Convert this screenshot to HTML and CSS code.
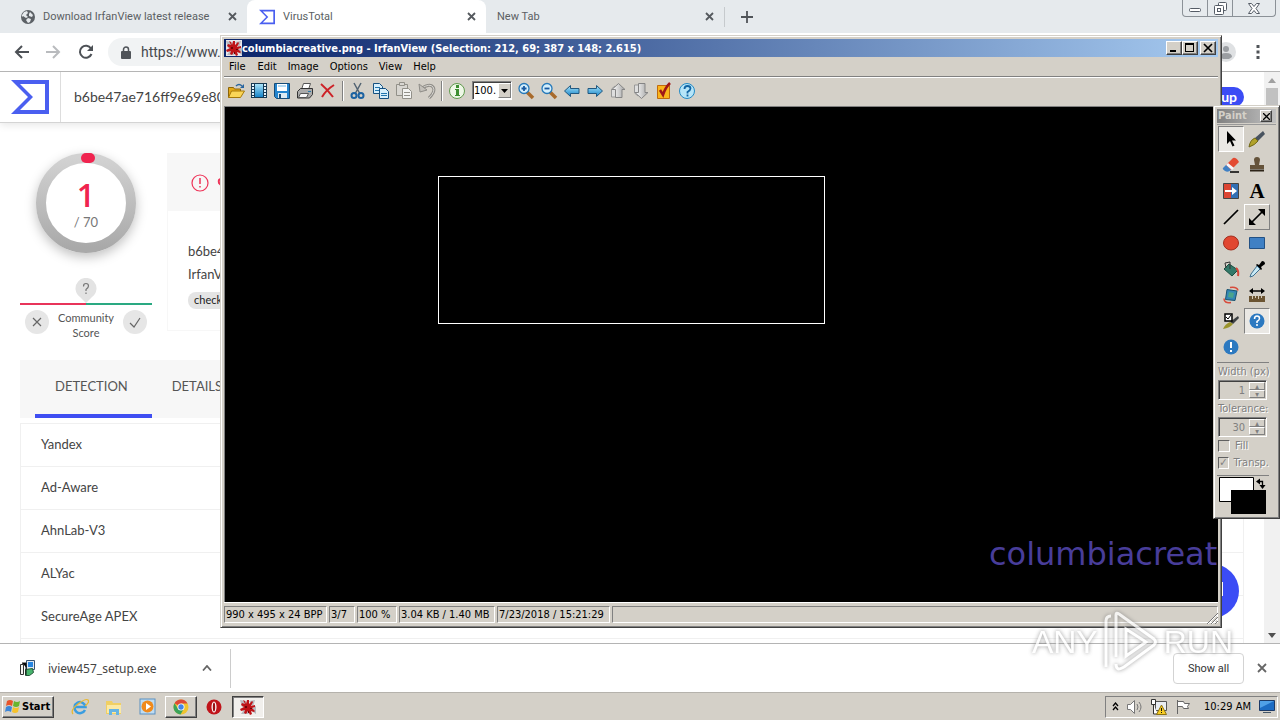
FILE: index.html
```html
<!DOCTYPE html>
<html lang="en">
<head>
<meta charset="utf-8">
<title>VirusTotal</title>
<link rel="stylesheet" href="styles.css">
</head>
<body>
<svg class="defs" aria-hidden="true">
  <defs>
    <linearGradient id="ring" x1="0" y1="0" x2="0" y2="1"><stop offset="0" stop-color="#d2d2d2"/><stop offset="1" stop-color="#a9a9a9"/></linearGradient>
    <linearGradient id="blue" x1="0" y1="0" x2="0" y2="1"><stop offset="0" stop-color="#a9e4fa"/><stop offset="1" stop-color="#1583c8"/></linearGradient>
    <linearGradient id="gray" x1="0" y1="0" x2="1" y2="0"><stop offset="0" stop-color="#fff"/><stop offset="1" stop-color="#a4a4a4"/></linearGradient>
    <symbol id="vt" viewBox="0 0 38 34"><path fill="#4a5ff0" fill-rule="evenodd" d="M0 0H38V34H0L17 17ZM9 4L22 17L9 30H34V4Z"/></symbol>
    <symbol id="splat" viewBox="0 0 16 16"><path fill="#b9babf" d="M0 1l6 1 1 5-5 1zM9 2l6-1-2 7zM1 15l4-6 4 6zM10 11l6 4v-8z"/><path fill="#bf1418" d="M3 1l2 1 1 3 1-4h2v4l3-3 1 1-2 4 4-1v2l-3 1 3 3-1 1-3-1 1 3-2 1-2-4-2 3-2-1 1-3-4 1-1-2 4-2-3-2 1-2 3 1z"/><path fill="#6d0508" d="M5 7h2v2H5zM10 9h2v1h-2zM8 12h1v2H8z"/></symbol>
  </defs>
</svg>

<div class="desktop">
  <section class="chrome">
    <div class="tabs">
      <div class="tab">
        <svg width="14" height="14" viewBox="0 0 14 14"><circle cx="7" cy="7" r="7" fill="#5c6166"/><path fill="#e6eaed" d="M3 2l3-1 1 2-2 2 2 2-2 1-3-2-1 1V5zM9 2l3 3-1 2-3-1V4zM7 8l3 1-1 3-2 1-2-3z"/></svg>
        <span class="tab-name">Download IrfanView latest release</span>
        <button class="x" aria-label="Close tab"><svg width="9" height="9" viewBox="0 0 9 9"><path d="M1 1l7 7M8 1L1 8" stroke="#55595e" stroke-width="1.8"/></svg></button>
      </div>
      <div class="tab active">
        <svg width="16" height="16"><use href="#vt"/></svg>
        <span class="tab-name">VirusTotal</span>
        <button class="x" aria-label="Close tab"><svg width="9" height="9" viewBox="0 0 9 9"><path d="M1 1l7 7M8 1L1 8" stroke="#55595e" stroke-width="1.8"/></svg></button>
      </div>
      <div class="tab last">
        <span class="tab-name">New Tab</span>
        <button class="x" aria-label="Close tab"><svg width="9" height="9" viewBox="0 0 9 9"><path d="M1 1l7 7M8 1L1 8" stroke="#55595e" stroke-width="1.8"/></svg></button>
      </div>
      <button class="x plus" aria-label="New tab"><svg width="12" height="12" viewBox="0 0 12 12"><path d="M6 0v12M0 6h12" stroke="#505458" stroke-width="1.8"/></svg></button>
      <div class="frame-buttons">
        <button aria-label="Minimize"><svg width="13" height="12" viewBox="0 0 13 12"><rect x=".5" y="6.500" width="11" height="3" rx="1" fill="#fff" stroke="#555c66"/></svg></button>
        <button aria-label="Restore"><svg width="13" height="13" viewBox="0 0 13 13"><g fill="#fff" stroke="#555c66"><rect x="4.500" y=".5" width="8" height="8" rx="1"/><rect x=".5" y="3.500" width="9" height="9" rx="1"/><rect x="3.500" y="6.500" width="3" height="3"/></g></svg></button>
        <button class="wide" aria-label="Close"><svg width="12" height="11" viewBox="0 0 12 11"><path d="M.5.5h3L6 3.500 8.500.5h3L8 5.500l3.500 5h-3L6 7.500l-2.500 3h-3L4 5.500z" fill="#fff" stroke="#555c66"/></svg></button>
      </div>
    </div>

    <div class="nav">
      <button aria-label="Back"><svg width="16" height="14" viewBox="0 0 16 14"><path d="M15 7H2M8 1L2 7l6 6" fill="none" stroke="#4d5156" stroke-width="2"/></svg></button>
      <button aria-label="Forward"><svg width="16" height="14" viewBox="0 0 16 14"><path d="M0 7h13M7 1l6 6-6 6" fill="none" stroke="#b9bbbe" stroke-width="2"/></svg></button>
      <button aria-label="Reload"><svg width="16" height="16" viewBox="0 0 16 16"><path d="M13 4.500A6 6 0 1 0 13.500 10" fill="none" stroke="#4d5156" stroke-width="2"/><path d="M15 1v6H9z" fill="#4d5156"/></svg></button>
      <label class="omnibox">
        <svg width="10" height="13" viewBox="0 0 10 13"><rect y="5" width="10" height="8" rx="1" fill="#505459"/><path d="M2.500 6V3.500a2.500 2.500 0 0 1 5 0V6" fill="none" stroke="#505459" stroke-width="1.500"/></svg>
        <input aria-label="Address" value="https://www.">
      </label>
      <svg class="avatar" width="20" height="20" viewBox="0 0 20 20"><circle cx="10" cy="10" r="10" fill="#dfe1e3"/><circle cx="10" cy="7" r="3" fill="#9b9ea2"/><path d="M4 15q0-4 6-4t6 4l-3 2H7z" fill="#9b9ea2"/></svg>
      <button aria-label="Menu"><svg width="4" height="14" viewBox="0 0 4 14"><path d="M.5 0h3v3h-3zM.5 5.500h3v3h-3zM.5 11h3v3h-3z" fill="#505459"/></svg></button>
    </div>

    <div class="viewport">
      <div class="page">
        <header class="vt-head">
          <a class="vt-logo" href="#" aria-label="VirusTotal"><svg width="38" height="34"><use href="#vt"/></svg></a>
          <input class="vt-search" aria-label="Search" value="b6be47ae716ff9e69e80">
          <button class="signup">Sign up</button>
        </header>
        <main class="vt-main">
          <div class="report">
            <div class="verdict">
              <div class="score">
                <svg width="100" height="100" viewBox="0 0 100 100"><circle cx="50" cy="50" r="45" fill="#fff" stroke="url(#ring)" stroke-width="10"/><rect x="45" y="0" width="14" height="10" rx="5" fill="#f0244f"/></svg>
                <div class="score-text"><span class="hits">1</span><span class="total">/ 70</span></div>
              </div>
              <div class="meter">
                <svg width="22" height="25" viewBox="0 0 22 25"><path d="M11 25L5 19A10.500 10.500 0 1 1 17 19z" fill="#e3e3e3"/><path d="M8.500 8.500q0-3 2.500-3t2.500 2.500q0 1.500-2.500 3.500v1.500M11 14.500v1.500" fill="none" stroke="#777" stroke-width="1.200"/></svg>
                <div class="bar"></div>
              </div>
              <div class="votes">
                <button aria-label="Malicious"><svg width="10" height="10" viewBox="0 0 10 10"><path d="M1 1l8 8M9 1L1 9" stroke="#666" stroke-width="1.200"/></svg></button>
                <span>Community<br>Score</span>
                <button aria-label="Harmless"><svg width="12" height="11" viewBox="0 0 12 11"><path d="M1 6l4 4 6-9" fill="none" stroke="#666" stroke-width="1.200"/></svg></button>
              </div>
            </div>
            <div class="card">
              <div class="card-head"><svg width="36" height="18" viewBox="0 0 36 18"><circle cx="9" cy="9" r="8" fill="none" stroke="#ee3358" stroke-width="1.200"/><path d="M9 4v6M9 12v1.500" stroke="#ee3358" stroke-width="1.500"/><path d="M34 5h-4q-3 0-2 4l5 5" fill="none" stroke="#ee3358" stroke-width="2"/></svg></div>
              <div class="card-body"><span>b6be4</span><span>IrfanV</span><span class="tag">check</span></div>
            </div>
          </div>
          <nav class="vt-tabs"><a class="on" href="#">DETECTION</a><a href="#">DETAILS</a></nav>
          <table class="engines">
            <tr><td>Yandex</td></tr>
            <tr><td>Ad-Aware</td></tr>
            <tr><td>AhnLab-V3</td></tr>
            <tr><td>ALYac</td></tr>
            <tr><td>SecureAge APEX</td></tr>
            <tr><td></td></tr>
          </table>
        </main>
        <button class="fab" aria-label="Chat"><svg width="22" height="18" viewBox="0 0 22 18"><path d="M0 0h22v14H8l-4 4v-4H0z" fill="#fff"/></svg></button>
      </div>
      <div class="scroll">
        <svg width="8" height="5" viewBox="0 0 8 5"><path d="M0 5l4-5 4 5z" fill="#a0a0a0"/></svg>
        <div class="thumb"></div>
        <svg class="down" width="8" height="5" viewBox="0 0 8 5"><path d="M0 0l4 5 4-5z" fill="#505050"/></svg>
      </div>
    </div>

    <div class="downloads">
      <div class="dl-item">
        <svg width="16" height="16" viewBox="0 0 16 16"><path fill="#dfe8f2" stroke="#39536f" d="M6.500.5h8v9h-8z"/><path fill="#2786e2" d="M8 2h5v5H8z"/><path fill="#8ba1b5" d="M9 10h4v2H9z"/><path fill="#f4f4f0" stroke="#333" d="M.5 4.500h3v10h-3z"/><path fill="#47b46c" stroke="#26573a" d="M5.500 9.500l7-1 1 4-4 3h-4z"/><path stroke="#111" d="M2 3h4v4M6 6v9"/></svg>
        <span>iview457_setup.exe</span>
        <button class="x" aria-label="Download options"><svg width="10" height="6" viewBox="0 0 10 6"><path d="M1 5.500L5 1l4 4.500" fill="none" stroke="#666" stroke-width="1.800"/></svg></button>
      </div>
      <button class="show-all">Show all</button>
      <button class="x" aria-label="Close downloads"><svg width="10" height="10" viewBox="0 0 10 10"><path d="M1 1l8 8M9 1L1 9" stroke="#666" stroke-width="1.800"/></svg></button>
    </div>
  </section>

  <footer class="taskbar">
    <button class="start"><svg width="16" height="16" viewBox="0 0 16 16"><path fill="#e8542a" d="M2 2q3-2 6 0L7 7Q4 5 1 7z"/><path fill="#68b52f" d="M9 2q3 2 6 0l-1 5q-3 2-6 0z"/><path fill="#3d86d8" d="M1 8q3-2 6 0l-1 5q-3-2-6 0z"/><path fill="#f6c22c" d="M8 8q3 2 6 0l-1 5q-3 2-6 0z"/></svg>Start</button>
    <button class="quick" aria-label="Internet Explorer"><svg width="18" height="18" viewBox="0 0 18 18"><path d="M14 12a5.500 5.500 0 1 1 .5-3H4" fill="none" stroke="#3a9de0" stroke-width="2.500"/><path d="M2 16Q-1 12 7 6t10-4q2 2-3 6" fill="none" stroke="#e9b932" stroke-width="1.300"/></svg></button>
    <button class="quick" aria-label="Explorer"><svg width="18" height="18" viewBox="0 0 18 18"><path fill="#f0cf63" d="M1 3h6l1 2h8v11H1z"/><path fill="#fbe9a4" d="M2 7h14v8H2z"/><path fill="#67b4e2" d="M4 17v-6h10v6h-3v-3H7v3z"/></svg></button>
    <button class="quick" aria-label="Media Player"><svg width="18" height="18" viewBox="0 0 18 18"><rect x="1" y="1" width="15" height="15" fill="#bfdcf2" stroke="#5a90c0"/><circle cx="8.500" cy="8.500" r="6" fill="#f08a1c"/><path d="M7 5l5 3.500L7 12z" fill="#fff"/></svg></button>
    <button class="task" aria-label="Chrome"><svg width="16" height="16" viewBox="0 0 16 16"><circle cx="8" cy="8" r="7.500" fill="#efc430"/><path d="M8 8L1.500 4.200A7.500 7.500 0 0 1 14.500 4.500H8z" fill="#dd4938"/><path d="M1.500 4.200A7.500 7.500 0 0 0 7.500 15.500L11 9.500 5 9.800z" fill="#3ba35a"/><circle cx="8" cy="8" r="3.500" fill="#fff"/><circle cx="8" cy="8" r="2.700" fill="#4285e8"/></svg></button>
    <button class="quick" aria-label="Opera"><svg width="16" height="16" viewBox="0 0 16 16"><circle cx="8" cy="8" r="7.500" fill="#c0141a"/><ellipse cx="8" cy="8" rx="2.500" ry="5.500" fill="#fff"/><ellipse cx="8" cy="8" rx="1.200" ry="4.500" fill="#9b1014"/></svg></button>
    <button class="task pressed" aria-label="IrfanView"><svg width="16" height="16"><use href="#splat"/></svg></button>
    <div class="tray">
      <svg width="7" height="9" viewBox="0 0 7 9"><path d="M1 4l2.500-3L6 4M1 8l2.500-3L6 8" fill="none" stroke="#000" stroke-width="1.300"/></svg>
      <svg width="16" height="16" viewBox="0 0 16 16"><path d="M.5 5.500h3l4-4v13l-4-4h-3z" fill="#fff" stroke="#777"/><path d="M10 5q2 3 0 6M12 3q4 5 0 10" fill="none" stroke="#777"/></svg>
      <svg width="16" height="16" viewBox="0 0 16 16"><path d="M4.500 2.500h11v9h-11z" fill="#e9edf2" stroke="#555"/><path d="M.5.5h4v5h-4zM2.500 5v10h4" fill="#fff" stroke="#333"/><path d="M10.500 6l5 9.500h-10z" fill="#f8cd24" stroke="#8c7211"/><path d="M10.500 9v3M10.500 13v1" stroke="#111"/></svg>
      <svg width="16" height="16" viewBox="0 0 16 16"><path d="M2.500 1v14M2.500 2.500h6l1 2h5l-2 3 1 2h-5l-1-2h-5" fill="#fff" stroke="#666"/></svg>
      <time>10:29 AM</time>
      <svg width="16" height="14" viewBox="0 0 16 14"><path d="M.5.500h15v10H.5z" fill="#1c6cc4" stroke="#1c3a67"/><path d="M1 1h14L1 8z" fill="#4fa0e8"/><path d="M4 12h8v1H4z" fill="#456"/></svg>
    </div>
  </footer>

  <section class="window irfan">
    <div class="title">
      <svg width="16" height="16"><rect width="16" height="16" fill="#e8e8ee"/><use href="#splat"/></svg>
      <h1>columbiacreative.png - IrfanView (Selection: 212, 69; 387 x 148; 2.615)</h1>
      <button aria-label="Minimize"><svg width="10" height="10" viewBox="0 0 10 10"><path d="M1 7h6v2H1z"/></svg></button>
      <button aria-label="Maximize"><svg width="10" height="10" viewBox="0 0 10 10"><path d="M0 0h9v9H0zM1 2v6h7V2z" fill-rule="evenodd"/></svg></button>
      <button class="close" aria-label="Close"><svg width="10" height="10" viewBox="0 0 10 10"><path d="M1 1l8 8M9 1L1 9" stroke="#000" stroke-width="1.700"/></svg></button>
    </div>
    <nav class="menu"><button>File</button><button>Edit</button><button>Image</button><button>Options</button><button>View</button><button>Help</button></nav>
    <div class="tools">
      <button aria-label="Open"><svg width="18" height="18" viewBox="0 0 18 18"><path fill="#e5a817" stroke="#8c6508" d="M1.500 15.500v-10h5l1 1.500h6v3"/><path fill="#fbd556" stroke="#a67808" d="M1.500 15.500l3-6.500h13l-4 6.500z"/><path d="M9 4q3-3 6 0" fill="none" stroke="#28659f" stroke-width="1.500"/><path fill="#28659f" d="M17 2v4h-4z"/></svg></button>
      <button aria-label="Slideshow"><svg width="18" height="18" viewBox="0 0 18 18"><path fill="#163a54" d="M1 1h16v15H1z"/><path fill="url(#blue)" d="M5 2h8v13H5z"/><path stroke="#e6f5ff" stroke-dasharray="2 1" d="M3 2v13M15 2v13" stroke-width="2"/></svg></button>
      <button aria-label="Save"><svg width="18" height="18" viewBox="0 0 18 18"><path fill="#2384ce" stroke="#164c78" d="M1.500 1.500h15v15h-13l-2-2z"/><path fill="#fff" d="M4 2h10v7H4z"/><path fill="#b3d9f2" d="M5 3h8v2H5z"/><path fill="#dceaf3" d="M5 11h9v5H5z"/><path fill="#164c78" d="M6 12h2v4H6z"/></svg></button>
      <button aria-label="Print"><svg width="18" height="18" viewBox="0 0 18 18"><path fill="#fff" stroke="#555" d="M5.500 7.500l2-6h7l-2 6z"/><path fill="#aaa" stroke="#333" d="M1.500 9.500l3-3h12v6l-3 3.500h-12z"/><path fill="#f7f7f7" stroke="#555" d="M4.500 11.500h8l-2 4h-8z"/><path stroke="#2a79a9" d="M12 9.500h3"/></svg></button>
      <button aria-label="Delete"><svg width="18" height="18" viewBox="0 0 18 18"><path d="M2 2q6 5 12 13M15 3Q7 8 3 15" fill="none" stroke="#cd2127" stroke-width="2"/></svg></button>
      <i class="sep"></i>
      <button aria-label="Cut"><svg width="18" height="18" viewBox="0 0 18 18"><path d="M5 1l6 11M12 1L6 12" stroke="#526372" stroke-width="1.500"/><circle cx="5" cy="13.500" r="2.500" fill="none" stroke="#1c62a1" stroke-width="2"/><circle cx="12" cy="13.500" r="2.500" fill="none" stroke="#1c62a1" stroke-width="2"/></svg></button>
      <button aria-label="Copy"><svg width="18" height="18" viewBox="0 0 18 18"><g fill="#d7effc" stroke="#155080"><path d="M1.500 1.500h6l3 3v7h-9z"/><path d="M7.500 6.500h6l3 3v7h-9z"/></g><path d="M3 5.500h5M3 8.500h4M9 11.500h6M9 13.500h6" stroke="#2175ae"/></svg></button>
      <button aria-label="Paste"><svg width="18" height="18" viewBox="0 0 18 18"><g fill="#d8d6d1" stroke="#929089"><path d="M1.500 2.500h11v11h-11z"/><path d="M4.500.5h5v3h-5z"/><path fill="#f4f4f2" d="M7.500 6.500h6l3 3v7h-9z"/></g><path d="M9 10.500h6M9 13.500h6" stroke="#929089"/></svg></button>
      <button aria-label="Undo"><svg width="18" height="18" viewBox="0 0 18 18"><path d="M4 6q8-5 11-1t-4 11" fill="none" stroke="#8f8d88" stroke-width="3"/><path d="M4 6q8-5 11-1t-4 11" fill="none" stroke="#d9d7d2"/><path d="M1 2l1 8 7-2z" fill="#c3c0ba" stroke="#8f8d88"/></svg></button>
      <i class="sep"></i>
      <button aria-label="Information"><svg width="18" height="18" viewBox="0 0 18 18"><circle cx="9" cy="9" r="7.500" fill="#eef7e7" stroke="#609b4e"/><path d="M8 3h3v3H8zM7 7h4v6h1v1H7v-1h1V8H7z" fill="#3c8e30"/></svg></button>
      <div class="zoom"><select aria-label="Zoom"><option>100.</option></select><span class="drop"><svg width="7" height="4" viewBox="0 0 7 4"><path d="M0 0h7L3.500 4z"/></svg></span></div>
      <button aria-label="Zoom in"><svg width="18" height="18" viewBox="0 0 18 18"><path d="M10 10l6 6" stroke="#a86a2c" stroke-width="3.500"/><circle cx="7" cy="6.500" r="5" fill="#d5effc" stroke="#2579ba" stroke-width="1.300"/><path d="M7 4v5M4.500 6.500h5" stroke="#1759a1" stroke-width="1.800"/></svg></button>
      <button aria-label="Zoom out"><svg width="18" height="18" viewBox="0 0 18 18"><path d="M10 10l6 6" stroke="#a86a2c" stroke-width="3.500"/><circle cx="7" cy="6.500" r="5" fill="#d5effc" stroke="#2579ba" stroke-width="1.300"/><path d="M4.500 6.500h5" stroke="#1759a1" stroke-width="1.800"/></svg></button>
      <button aria-label="Previous"><svg width="18" height="18" viewBox="0 0 18 18"><path d="M1.500 9l6-5.500v3h8.500v5H7.500v3z" fill="url(#blue)" stroke="#215880"/></svg></button>
      <button aria-label="Next"><svg width="18" height="18" viewBox="0 0 18 18"><path d="M16.500 9l-6-5.500v3H2v5h8.500v3z" fill="url(#blue)" stroke="#215880"/></svg></button>
      <button aria-label="Previous page"><svg width="18" height="18" viewBox="0 0 18 18"><path d="M2.500 15V7L6 4l2 2v9z" fill="#dedede" stroke="#999"/><path d="M9.500 1.500l6.500 6h-3v8H6.500v-8H3z" fill="url(#gray)" stroke="#858585"/></svg></button>
      <button aria-label="Next page"><svg width="18" height="18" viewBox="0 0 18 18"><path d="M2.500 3v8L6 14l2-2V3z" fill="#dedede" stroke="#999"/><path d="M9.500 16.500l6.500-6h-3v-9H6.500v9H3z" fill="url(#gray)" stroke="#858585"/></svg></button>
      <button aria-label="Settings"><svg width="18" height="18" viewBox="0 0 18 18"><path fill="#fab51c" stroke="#c06b0d" d="M2.500 3.500h12v13h-12z"/><path d="M5 8l3 5q2-7 7-12" fill="none" stroke="#a01717" stroke-width="2.500"/></svg></button>
      <button aria-label="Help"><svg width="18" height="18" viewBox="0 0 18 18"><circle cx="9" cy="9" r="7.500" fill="#b6e5f9" stroke="#238ac5"/><path d="M6.500 7q0-3 3-3t3 2.500Q12.500 8 9.500 10v1.500M9.500 12.500v2" fill="none" stroke="#1164a3" stroke-width="1.800"/></svg></button>
    </div>
    <div class="canvas"><span class="picture-text">columbiacreat</span><div class="selection"></div></div>
    <div class="status">
      <span class="size">990 x 495 x 24 BPP</span><span class="index">3/7</span><span class="scale">100 %</span><span class="bytes">3.04 KB / 1.40 MB</span><span class="date">7/23/2018 / 15:21:29</span><span class="rest"></span>
      <svg class="grip" width="12" height="12" viewBox="0 0 12 12"><path d="M1 12L12 1M5 12l7-7M9 12l3-3" stroke="#777"/><path d="M2 12L12 2M6 12l6-6" stroke="#fff"/></svg>
    </div>
  </section>

  <section class="window paint">
    <div class="title"><h2>Paint</h2><button aria-label="Close"><svg width="7" height="7" viewBox="0 0 7 7"><path d="M0 0l7 7M7 0L0 7" stroke="#000" stroke-width="1.300"/></svg></button></div>
    <div class="palette">
      <button class="down" aria-label="Select"><svg width="18" height="18" viewBox="0 0 18 18"><path d="M5 1v13l3-3 2.500 5.500 2-1L10 10.500h4z"/></svg></button>
      <button aria-label="Brush"><svg width="18" height="18" viewBox="0 0 18 18"><path d="M15 1l2 3-7 7-3-3z" fill="#49535f"/><path d="M7 8l3 3q-3 4-9 6 1-7 6-9z" fill="#b1a22b" stroke="#716818"/></svg></button>
      <button aria-label="Eraser"><svg width="18" height="18" viewBox="0 0 18 18"><path d="M11 2q3-1 6 4l-8 8-5-5z" fill="#e34a32"/><path d="M6 7l6 5-2 2-6-5z" fill="#f6f6fb"/><path d="M4 9l5 5q-3 3-6 1t-2-3z" fill="#4080c4"/><path d="M8 16h9" stroke="#000" stroke-width="1.500"/></svg></button>
      <button aria-label="Clone"><svg width="18" height="18" viewBox="0 0 18 18"><path d="M6 4q0-3 3-3t3 3l-1 5h5v4H2V9h5z" fill="#65533a"/><path d="M2 14.500h14" stroke="#2d2418" stroke-width="2"/></svg></button>
      <button aria-label="Replace color"><svg width="18" height="18" viewBox="0 0 18 18"><path fill="#dc4432" stroke="#444" d="M1.500 1.500h15v15h-15z"/><path fill="#326fb4" d="M9 2h7v14H9z"/><path fill="#fff" d="M3 8h7V5l5 4-5 4v-3H3z"/></svg></button>
      <button class="letter" aria-label="Text">A</button>
      <button aria-label="Line"><svg width="18" height="18" viewBox="0 0 18 18"><path d="M2 16L16 2" stroke="#000" stroke-width="1.700"/></svg></button>
      <button class="raised" aria-label="Arrow"><svg width="18" height="18" viewBox="0 0 18 18"><path d="M4 14L14 4" stroke="#000" stroke-width="1.700"/><path d="M17 1v7l-7-7zM1 17v-7l7 7z"/></svg></button>
      <button aria-label="Ellipse"><svg width="18" height="18" viewBox="0 0 18 18"><ellipse cx="9" cy="9" rx="7.500" ry="7" fill="#e14731" stroke="#a32d1e"/></svg></button>
      <button aria-label="Rectangle"><svg width="18" height="18" viewBox="0 0 18 18"><path fill="#3f80c4" stroke="#235184" d="M1.500 3.500h15v11h-15z"/></svg></button>
      <button aria-label="Fill tool"><svg width="18" height="18" viewBox="0 0 18 18"><path d="M7 4l9 6-6 6-8-7z" fill="#33796a" stroke="#184f40"/><path d="M8 9V2L3 3l1 5" fill="none" stroke="#333"/><path d="M14 8q3 2 2 8" fill="none" stroke="#d7483a" stroke-width="2"/></svg></button>
      <button aria-label="Color picker"><svg width="18" height="18" viewBox="0 0 18 18"><path d="M11 5l3-4q3 0 3 3l-4 3 1 2-1 1-5-5 1-1z"/><path d="M9 6l3 3-7 7-3 1 1-3z" fill="#c9eaf5" stroke="#3f7090"/></svg></button>
      <button aria-label="Rotate"><svg width="18" height="18" viewBox="0 0 18 18"><path d="M5 3.500l10 1.500-2 9.500-9.500-1z" fill="#3487b6" stroke="#195370"/><path d="M7 6l5 1-1 5-5-1z" fill="#4ba48b"/><path d="M8 1.500q7-1 8 3M9 16.500q-7 1-7-4" fill="none" stroke="#d74c3c" stroke-width="1.500"/></svg></button>
      <button aria-label="Measure"><svg width="18" height="18" viewBox="0 0 18 18"><path d="M3 5h12" stroke="#000" stroke-width="1.500"/><path d="M1 5l4-3v6zM17 5l-4-3v6z"/><path fill="#6b5432" d="M1 10h16v6H1z"/><path stroke="#d5ccb9" d="M4.500 10v3M7.500 10v2M10.500 10v3M13.500 10v2"/></svg></button>
      <button aria-label="Options"><svg width="18" height="18" viewBox="0 0 18 18"><path d="M16 4l1 2-6 6-3-2z" fill="#3d4144"/><path d="M8 10l3 2q-3 4-10 5 2-5 7-7z" fill="#9b942b"/><path fill="#fff" stroke="#000" stroke-width="1.500" d="M3 2h7v7H3z"/><path d="M4 5l2 2 3-4" fill="none" stroke="#000"/></svg></button>
      <button class="down" aria-label="Help"><svg width="18" height="18" viewBox="0 0 18 18"><circle cx="9" cy="9" r="7.500" fill="#2c79c0"/><path d="M6.500 7q0-3 2.500-3t2.500 2.500Q11.500 8 9 9.500V11M9 12v2" fill="none" stroke="#fff" stroke-width="1.500"/></svg></button>
      <button aria-label="About"><svg width="18" height="18" viewBox="0 0 18 18"><circle cx="9" cy="9" r="7.500" fill="#2c79c0"/><path d="M9 4v6M9 12v2" stroke="#fff" stroke-width="2"/></svg></button>
    </div>
    <div class="options">
      <label for="w">Width (px)</label>
      <div class="spin"><input id="w" value="1" disabled><div><button aria-label="Wider">▴</button><button aria-label="Narrower">▾</button></div></div>
      <label for="t">Tolerance:</label>
      <div class="spin"><input id="t" value="30" disabled><div><button aria-label="More">▴</button><button aria-label="Less">▾</button></div></div>
      <label class="check"><input type="checkbox" disabled>Fill</label>
      <label class="check"><input type="checkbox" checked disabled>Transp.</label>
    </div>
    <div class="colors">
      <svg width="50" height="38" viewBox="0 0 50 38"><path d="M.5.500h34v24H.5z" fill="#fff" stroke="#000"/><path d="M12 13h35v24H12z"/><path d="M40 4.500h3.500V9" fill="none" stroke="#000" stroke-width="1.300"/><path d="M37 4.500L41 1.500v6zM43.500 12l-3-4h6z"/></svg>
    </div>
  </section>

  <div class="watermark" aria-hidden="true"><span>ANY</span><svg width="54" height="62" viewBox="0 0 54 62"><path d="M2 56V10q0-5 5-5M12 46V4q0-3 3-1l35 25q3 3 0 6L20 56q-8 5-8-3M22 18v27l20-14z" fill="none" stroke="#fff" stroke-width="3"/></svg><span>RUN</span></div>
</div>
</body>
</html>
```
FILE: styles.css
```css
* { box-sizing: border-box; }
body { margin: 0; font-family: "DejaVu Sans Condensed", "DejaVu Sans", sans-serif; font-size: 11px; color: #000; }
button, input, select { font: inherit; color: inherit; margin: 0; padding: 0; border: 0; background: none; border-radius: 0; }
svg { display: block; flex: none; }
h1, h2 { margin: 0; font-size: 11px; }
a { color: inherit; text-decoration: none; }
.defs { position: absolute; width: 0; height: 0; }

.desktop { position: relative; height: 100vh; display: flex; flex-direction: column; overflow: hidden; }
.chrome { flex: 1; min-height: 0; display: flex; flex-direction: column; background: #fff; }

/* Browser tabs */
.tabs { display: flex; align-items: center; height: 33px; background: #e6eaed; color: #5b5f63; font-family: Roboto, sans-serif; font-size: 11px; }
.tab { display: flex; align-items: center; gap: 8px; width: 239px; height: 33px; padding: 0 7px 0 12px; }
.tab:first-child { width: 247px; padding: 0 7px 0 21px; }
.tab.active { background: #fff; border-radius: 8px 8px 0 0; }
.tab.last { padding-left: 11px; border-right: 1px solid #c6cacd; height: 20px; }
.tab-name { flex: 1; white-space: nowrap; }
.x { display: grid; place-items: center; width: 16px; height: 16px; }
.plus { margin-left: 14px; }
.frame-buttons { align-self: flex-start; display: flex; margin-left: auto; margin-right: 4px; height: 17px; border: 1px solid #8b9197; border-top: 0; border-radius: 0 0 4px 4px; }
.frame-buttons button { width: 25px; display: grid; place-items: center; border-right: 1px solid #8b9197; }
.frame-buttons .wide { width: 42px; border-right: 0; }

/* Browser toolbar */
.nav { display: flex; align-items: center; height: 39px; border-bottom: 1px solid #b5b5b5; padding: 0 20px 0 14px; gap: 16px; }
.nav button { width: 16px; display: grid; place-items: center; }
.nav button:last-child { width: 4px; }
.omnibox { flex: 1; display: flex; align-items: center; gap: 10px; height: 28px; padding-left: 13px; border-radius: 14px; background: #f1f3f4; margin-left: -2px; }
.omnibox input { flex: 1; font-family: Roboto, sans-serif; font-size: 14px; color: #46494d; }
.avatar { margin-right: 4px; }

/* Web page */
.viewport { flex: 1; min-height: 0; display: flex; }
.page { position: relative; flex: 1; min-width: 0; overflow: hidden; font-family: Lato, sans-serif; font-size: 13px; color: #444; }
.vt-head { display: flex; align-items: center; height: 51px; border-bottom: 1px solid #d4d4d4; padding-right: 20px; box-shadow: 0 2px 8px #0000001a; }
.vt-logo { width: 61px; height: 50px; padding: 8px 0 0 11px; border-right: 1px solid #ddd; }
.vt-search { flex: 1; padding: 0 0 2px 13px; font-size: 14px; }
.signup { height: 20px; padding: 0 7px; border-radius: 10px; background: #3b4cf5; color: #fff; font-weight: 700; font-size: 14px; line-height: 18px; }
.vt-main { padding: 30px 20px 0; }
.report { display: flex; gap: 15px; height: 178px; margin-bottom: 29px; }
.verdict { width: 132px; display: flex; flex-direction: column; }
.score { position: relative; width: 100px; height: 100px; margin-left: 16px; border-radius: 50%; box-shadow: 0 4px 12px #00000040; }
.score-text { position: absolute; inset: 24px 0 0; display: flex; flex-direction: column; align-items: center; }
.hits { font: 600 32px/36px "Open Sans", sans-serif; color: #f0244f; }
.total { font-size: 13px; line-height: 18px; color: #777; }
.meter { margin-top: 25px; display: flex; flex-direction: column; align-items: center; }
.bar { width: 100%; height: 2px; background: linear-gradient(90deg, #e8345a 50%, #2aa982 50%); }
.votes { display: flex; align-items: flex-start; justify-content: space-between; padding: 5px 5px 0; text-align: center; font-size: 11px; line-height: 15px; color: #555; }
.votes button { width: 24px; height: 24px; border-radius: 50%; background: #e6e6e6; display: grid; place-items: center; }
.card { flex: 1; border: 1px solid #f7f7f7; }
.card-head { height: 57px; background: #f7f7f7; padding: 20px 0 0 23px; }
.card-body { display: flex; flex-direction: column; align-items: flex-start; padding: 29px 0 0 20px; line-height: 23px; }
.tag { height: 17px; margin-top: 6px; padding: 0 6px; border-radius: 8px; background: #e4e4e4; color: #222; font-size: 11px; line-height: 16px; }
.vt-tabs { display: flex; height: 58px; padding-left: 15px; background: #f7f7f7; line-height: 52px; color: #555; font-size: 13px; }
.vt-tabs a { padding: 0 24px 0 20px; -webkit-text-stroke: 0; }
.vt-tabs .on { border-bottom: 4px solid #3f4ef2; }
.engines { width: 100%; margin-top: 5px; border-collapse: collapse; border: 1px solid #f0f0f0; }
.engines td { height: 43px; padding: 0 20px 2px; border-bottom: 1px solid #f0f0f0; }
.fab { position: absolute; right: 25px; bottom: 25px; width: 54px; height: 54px; border-radius: 50%; background: #3b4cf5; display: grid; place-items: center; }
.scroll { width: 16px; background: #f1f1f1; display: flex; flex-direction: column; align-items: center; gap: 5px; padding: 6px 2px 5px; }
.thumb { width: 12px; height: 120px; background: #c1c1c1; }
.scroll .down { margin-top: auto; }

/* Download shelf */
.downloads { display: flex; align-items: center; height: 49px; border-top: 1px solid #b4b4b4; padding-right: 10px; }
.dl-item { display: flex; align-items: center; gap: 12px; width: 231px; height: 39px; padding: 0 15px 0 20px; border-right: 1px solid #ccc; font-family: "Noto Sans", sans-serif; font-size: 12px; color: #444; }
.dl-item span { flex: 1; }
.show-all { margin-left: auto; margin-right: 10px; width: 71px; height: 31px; border: 1px solid #d3d3d3; border-radius: 4px; color: #333; font-family: Roboto, sans-serif; font-size: 11px; }

/* Taskbar */
.taskbar { display: flex; align-items: center; height: 28px; padding: 0 2px; background: #d4d0c8; border-top: 1px solid #b5b2ac; }
.start { display: flex; align-items: center; gap: 1px; width: 52px; height: 22px; padding-left: 2px; margin-right: 9px; font-weight: 700; }
.start, .task { border: 1px solid; border-color: #fff #404040 #404040 #fff; box-shadow: inset -1px -1px #808080; }
.quick { width: 34px; height: 22px; display: grid; place-items: center; }
.task { width: 32px; height: 22px; display: grid; place-items: center; }
.task.pressed { border-color: #404040 #fff #fff #404040; box-shadow: inset 1px 1px #808080; background: #f1efec; margin-left: 1px; }
.tray { margin-left: auto; display: flex; align-items: center; gap: 8px; height: 22px; padding: 0 2px 0 6px; border: 1px solid; border-color: #808080 #fff #fff #808080; }
.tray time { margin-left: 5px; }

/* Desktop windows */
.window { position: absolute; display: flex; flex-direction: column; background: #d4d0c8; border: 1px solid; border-color: #d4d0c8 #404040 #404040 #d4d0c8; box-shadow: inset 1px 1px #fff, inset -1px -1px #808080; }
.irfan { left: 220px; right: 58px; top: 35px; bottom: 92px; padding: 3px; }
.title { display: flex; align-items: center; color: #fff; }
.title button { display: grid; place-items: center; background: #d4d0c8; border: 1px solid; border-color: #fff #404040 #404040 #fff; box-shadow: inset -1px -1px #808080; }
.irfan .title { height: 18px; padding: 0 2px; background: linear-gradient(90deg, #0a246a, #a6caf0); }
.irfan h1 { flex: 1; white-space: nowrap; }
.irfan .title button { width: 16px; height: 14px; }
.irfan .title .close { margin-left: 2px; }
.menu { display: flex; height: 20px; border-bottom: 1px solid #808080; box-shadow: 0 1px #fff; padding-left: 2px; }
.menu button { padding: 0 6px 0 5px; }
.menu button:first-child { padding: 0 7px 0 3px; }
.tools { display: flex; align-items: center; height: 29px; padding-bottom: 2px; }
.tools > button { width: 23px; display: grid; place-items: center; }
.sep { width: 2px; height: 20px; margin: 0 2px 0 3px; border-left: 1px solid #808080; border-right: 1px solid #fff; }
.zoom { position: relative; width: 40px; height: 19px; margin: 0 2px 0 4px; background: #fff; border: 1px solid; border-color: #808080 #fff #fff #808080; box-shadow: inset 1px 1px #404040; }
.zoom select { appearance: none; width: 38px; height: 17px; padding-left: 1px; }
.drop { position: absolute; right: 0; top: 1px; width: 13px; height: 15px; display: grid; place-items: center; background: #d4d0c8; border: 1px solid; border-color: #fff #808080 #808080 #fff; pointer-events: none; }
.canvas { position: relative; flex: 1; overflow: hidden; background: #000; border: 1px solid #808080; border-width: 1px 0 0 1px; }
.selection { position: absolute; left: 213px; top: 69px; width: 387px; height: 148px; border: 1px solid #fff; }
.picture-text { position: absolute; left: 764px; top: 425px; font: 32px/44px "DejaVu Sans", sans-serif; color: #483d9a; }
.status { position: relative; display: flex; gap: 2px; height: 22px; padding: 3px 0 1px; border-top: 1px solid #fff; white-space: nowrap; }
.status span { padding-left: 1px; line-height: 16px; border: 1px solid; border-color: #808080 #fff #fff #808080; }
.size { width: 103px; } .index { width: 26px; } .scale { width: 40px; } .bytes { width: 96px; } .date { width: 113px; } .rest { flex: 1; }
.grip { position: absolute; right: 0; bottom: 0; }

/* Paint palette */
.paint { right: 0; top: 105px; width: 67px; padding: 3px; }
.paint .title { height: 14px; padding: 0 4px 0 1px; background: linear-gradient(90deg, #808080, #c0c0c0); color: #d4d0c8; }
.paint h2 { flex: 1; line-height: 14px; }
.paint .title button { width: 12px; height: 12px; }
.palette { display: grid; grid-template-columns: 26px 26px; grid-auto-rows: 26px; margin-top: 1px; padding: 1px 0 2px 1px; border-top: 1px solid #999; }
.palette button { display: grid; place-items: center; border: 1px solid transparent; }
.palette .down { border-color: #808080 #fff #fff #808080; background: #eae8e4; }
.palette .raised { border-color: #fff #808080 #808080 #fff; }
.palette .letter { font: 700 21px/22px "Liberation Serif", serif; }
.options { display: flex; flex-direction: column; border: solid #808080; border-width: 1px 0; margin-right: 7px; padding: 0 0 4px 1px; line-height: 17px; color: #808080; text-shadow: 1px 1px #fff; white-space: nowrap; }
.spin { display: flex; width: 49px; height: 20px; padding: 1px; border: 1px solid; border-color: #808080 #fff #fff #808080; box-shadow: inset 1px 1px #404040; }
.spin input { flex: 1; min-width: 0; padding-right: 4px; text-align: right; }
.spin div { display: grid; grid-template-rows: 8px 8px; width: 16px; }
.spin button { border: 1px solid; border-color: #fff #808080 #808080 #fff; font-size: 8px; line-height: 5px; overflow: hidden; }
.check { display: flex; align-items: center; gap: 5px; height: 17px; }
.check input { appearance: none; width: 12px; height: 12px; border: 1px solid; border-color: #606060 #fff #fff #606060; display: grid; place-items: center; }
.check input:checked::before { content: "✓"; font-size: 11px; line-height: 10px; font-weight: 700; }
.colors { padding: 1px 0 0 2px; }

.watermark { position: absolute; right: 47px; bottom: 47px; display: flex; align-items: center; gap: 6px; color: #fff; font: 32px/40px "Liberation Sans", sans-serif; opacity: .75; filter: drop-shadow(0 0 2px #777); pointer-events: none; }
```
